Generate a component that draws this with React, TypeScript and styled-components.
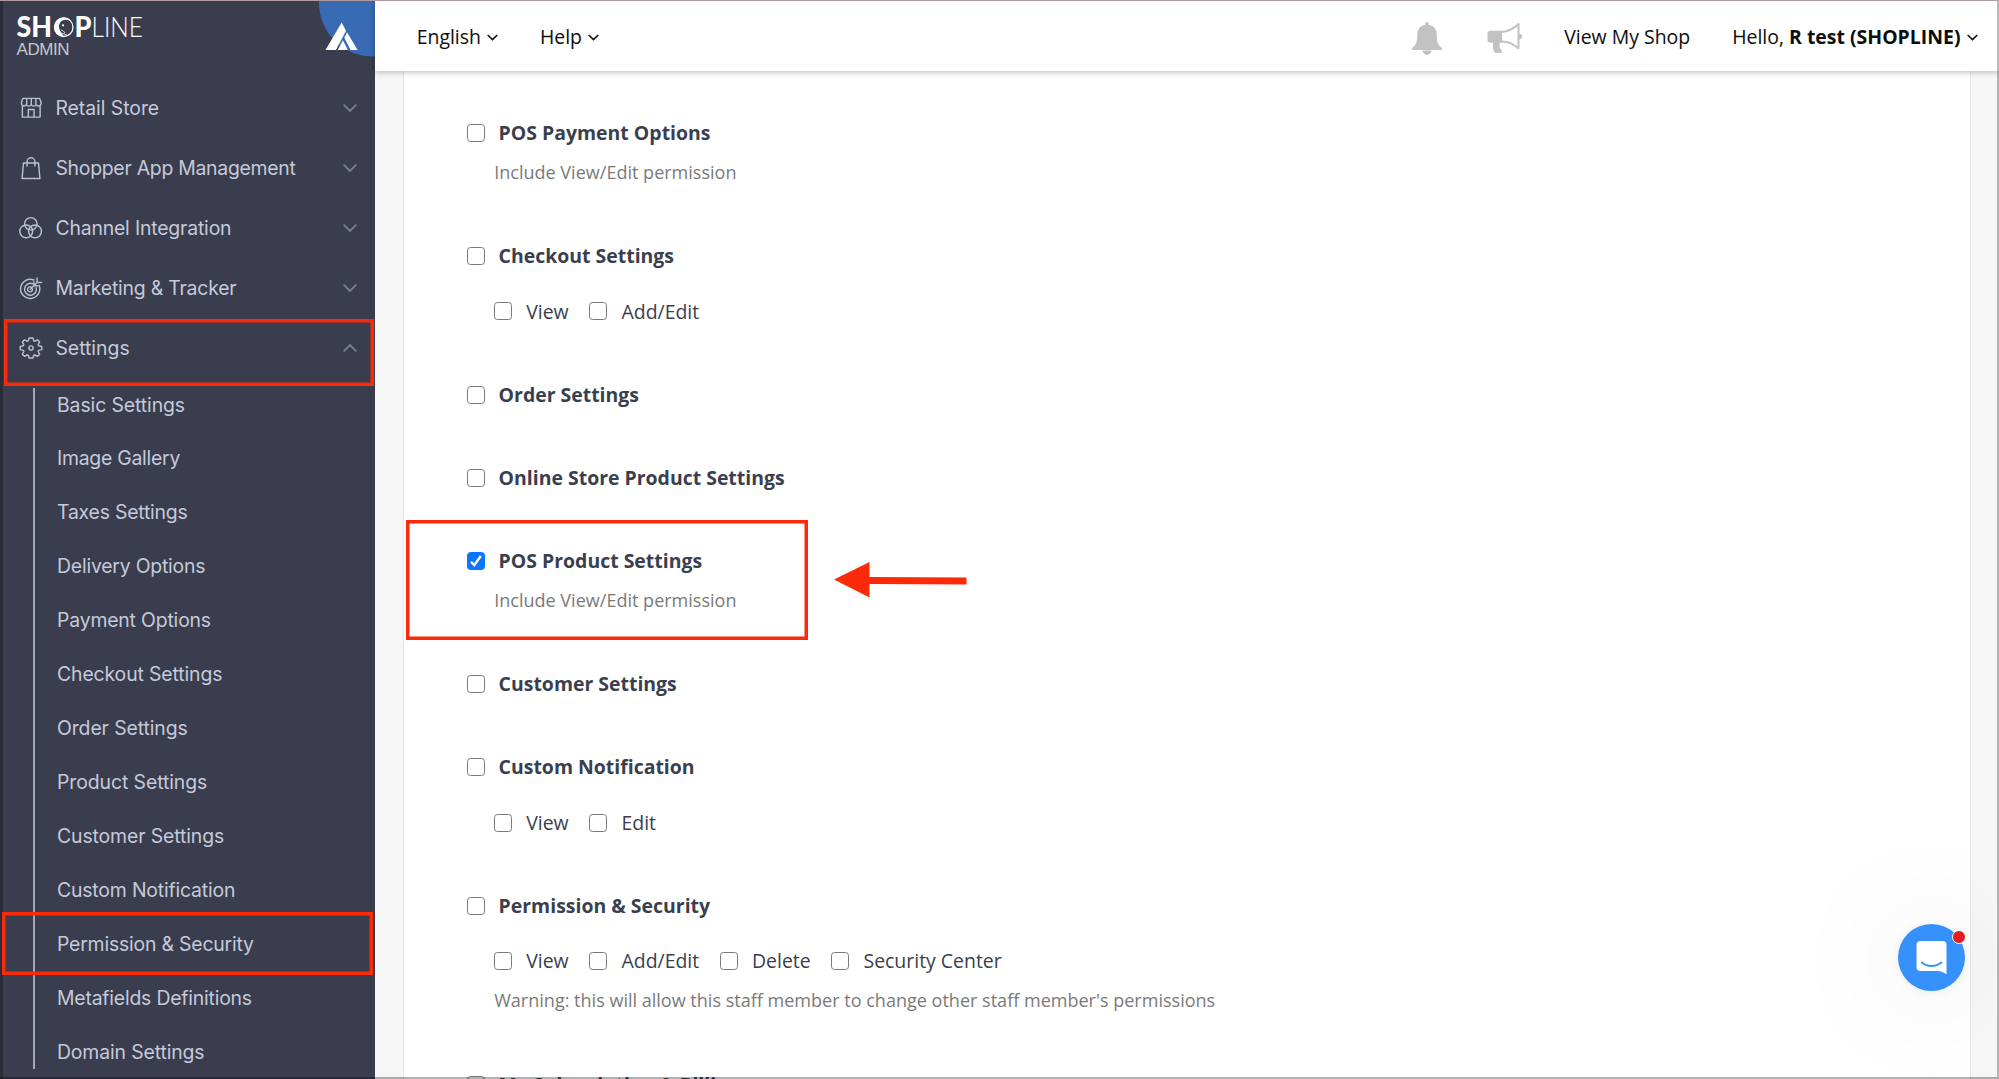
import React, { useState } from "react";
import styled, { createGlobalStyle } from "styled-components";

const GlobalStyle = createGlobalStyle`
  *, *::before, *::after { box-sizing: border-box; }
  body { margin: 0; background: #f7f7f7; overflow: hidden; }
`;

const Page = styled.div`
  position: relative;
  display: flex;
  width: 1999px;
  height: 1079px;
  overflow: hidden;
  background: #f7f7f7;
  font-family: "Open Sans", "Noto Sans", sans-serif;
`;

/* ---------- sidebar ---------- */

const Sidebar = styled.aside`
  flex: none;
  width: 375px;
  height: 100%;
  background: #393d4d;
  border-left: 3px solid #2a2d39;
  color: #c5cadb;
  font-family: Inter, "Liberation Sans", sans-serif;
  overflow: hidden;
`;

const Brand = styled.div`
  display: flex;
  justify-content: space-between;
  height: 78px;
`;

const MenuRow = styled.div<{ $spacing: number }>`
  display: flex;
  align-items: center;
  height: 60px;
  padding: 0 18px 0 16px;
  font-size: 19.4px;
  letter-spacing: ${(p) => p.$spacing}px;
`;

const MenuIcon = styled.svg`
  flex: none;
  width: 24px;
  height: 24px;
  margin-right: 12.4px;
  fill: none;
  stroke: #b9bfd1;
  stroke-width: 1.5;
  stroke-linecap: round;
  stroke-linejoin: round;
`;

const MenuLabel = styled.span`
  flex: 1;
  white-space: nowrap;
`;

const MenuChevron = styled.svg<{ $open?: boolean }>`
  width: 14px;
  height: 8px;
  fill: none;
  stroke: #747d92;
  stroke-width: 1.9;
  transform: ${(p) => (p.$open ? "rotate(180deg)" : "none")};
`;

const SubMenu = styled.ul`
  list-style: none;
  margin: 10px 0 0 30px;
  padding: 0;
  height: 681px;
  border-left: 2px solid #a4a9b9;
`;

const SubItem = styled.li<{ $spacing: number }>`
  display: flex;
  align-items: center;
  height: 54px;
  padding-left: 22px;
  font-size: 19.4px;
  letter-spacing: ${(p) => p.$spacing}px;
  white-space: nowrap;
  &:first-child { height: 43px; padding-bottom: 10px; }
`;

/* ---------- header ---------- */

const Main = styled.div`
  flex: 1;
  min-width: 0;
  display: flex;
  flex-direction: column;
`;

const Header = styled.header`
  flex: none;
  z-index: 1;
  display: flex;
  align-items: center;
  justify-content: space-between;
  height: 71px;
  padding: 2px 21.5px 0 41.7px;
  background: #fff;
  color: #0d0d0d;
  font-size: 19.44px;
  box-shadow: 0 1px 6px rgba(0, 0, 0, 0.28);
`;

const HeaderGroup = styled.div`
  display: flex;
  align-items: center;
  gap: 42px;
`;

const HeaderLink = styled.span`
  display: flex;
  align-items: center;
  white-space: pre;
`;

const HeaderChevron = styled.svg`
  width: 11px;
  height: 7px;
  margin: 2px 0 0 6px;
  fill: none;
  stroke: #111;
  stroke-width: 1.7;
`;

const HeaderIcon = styled.svg<{ $w: number; $shift: number }>`
  width: ${(p) => p.$w}px;
  height: 36px;
  margin: 4px ${(p) => p.$shift}px 0 0;
  color: #c2c2c2;
`;

/* ---------- permissions ---------- */

const Card = styled.main`
  flex: 1;
  min-height: 0;
  overflow: hidden;
  margin: 0 28px 0 28px;
  padding: 48px 0 0 62.6px;
  background: #fff;
  border: solid #e6e6e6;
  border-width: 0 1px;
`;

const Section = styled.section`
  margin-bottom: 55.4px;
`;

const Row = styled.div<{ $sub?: boolean }>`
  display: flex;
  align-items: center;
  height: 27.8px;
  margin: ${(p) => (p.$sub ? "27.6px 0 0 27.6px" : "0")};
`;

const Option = styled.label<{ $bold?: boolean }>`
  display: flex;
  align-items: center;
  gap: 14px;
  margin-right: 20.8px;
  color: #3a3f4f;
  font-size: 19.44px;
  line-height: 27.8px;
  font-weight: ${(p) => (p.$bold ? 700 : 400)};
  white-space: nowrap;
`;

const CheckCell = styled.span`
  display: grid;
  width: 18px;
  height: 18px;
  > * { grid-area: 1 / 1; }
`;

const CheckInput = styled.input`
  appearance: none;
  width: 18px;
  height: 18px;
  margin: 0;
  border: 1.4px solid #7a7a7a;
  border-radius: 3.5px;
  background: #fff;
  &:checked { background: #0a76ff; border-color: #0a76ff; }
`;

const Tick = styled.svg`
  width: 18px;
  height: 18px;
  fill: none;
  stroke: #fff;
  stroke-width: 2.4;
  pointer-events: none;
`;

const Hint = styled.p`
  margin: 0 0 0 27.6px;
  padding-top: 12.2px;
  color: #7a7a7a;
  font-size: 18.05px;
  line-height: 27.8px;
  white-space: nowrap;
`;

/* ---------- overlays ---------- */

const Frame = styled.div`
  position: absolute;
  inset: 0;
  z-index: 5;
  pointer-events: none;
  border-top: 1px solid #b09a9d;
  border-right: 2px solid rgba(0, 0, 0, 0.27);
  border-bottom: 2px solid rgba(0, 0, 0, 0.3);
`;

const Highlight = styled.div<{ $x: number; $y: number; $w: number; $h: number }>`
  position: absolute;
  z-index: 4;
  left: ${(p) => p.$x}px;
  top: ${(p) => p.$y}px;
  width: ${(p) => p.$w}px;
  height: ${(p) => p.$h}px;
  box-shadow: inset 0 0 0 3.5px #fb2a08;
  pointer-events: none;
`;

const Arrow = styled.svg`
  position: absolute;
  z-index: 4;
  left: 834px;
  top: 561px;
  width: 133px;
  height: 37px;
  fill: #fb2a08;
`;

const ChatButton = styled.button`
  position: absolute;
  z-index: 3;
  left: 1897.5px;
  top: 924px;
  width: 67px;
  height: 67px;
  padding: 0;
  border: 0;
  border-radius: 50%;
  background: #3691fc;
  box-shadow: 0 1px 9px rgba(0, 0, 0, 0.06), 0 3px 120px rgba(0, 0, 0, 0.13);
`;

const ChatGlyph = styled.svg`
  display: block;
  width: 67px;
  height: 67px;
`;

const ChatDot = styled.span`
  position: absolute;
  left: 54px;
  top: 6px;
  width: 14px;
  height: 14px;
  border: 1.4px solid #fff;
  border-radius: 50%;
  background: #e01f22;
`;

/* ---------- drawings ---------- */

const Logo = () => (
  <svg width="160" height="60" viewBox="3 0 160 60">
    <g fontFamily="Lato, sans-serif" fill="#fff" fontSize="28">
      <text x="16.5" y="37" fontWeight="900" textLength="35.5" lengthAdjust="spacingAndGlyphs">SH</text>
      <text x="74.5" y="37" fontWeight="900" textLength="17" lengthAdjust="spacingAndGlyphs">P</text>
      <text x="91.5" y="37" fontWeight="300" textLength="51.5" lengthAdjust="spacingAndGlyphs">LINE</text>
    </g>
    <circle cx="63.7" cy="27.2" r="9.3" fill="none" stroke="#fff" strokeWidth="1.3" />
    <path d="M54.5 27a9.4 9.4 0 0 1 16.4-6.2c-3-1.700-7.600-1.500-9.900.8-2.500 2.600-2.400 6.300-.8 9.200.8 1.500 2 3.200 3.600 5.800-5.100.2-9.300-4.200-9.300-9.600z" fill="#fff" />
    <path d="M61 30c2 .4 3.200 1.400 3.800 3M61.500 33l5.500 2" stroke="#fff" strokeWidth=".8" fill="none" />
    <circle cx="63" cy="25.300" r="1.100" fill="#fff" />
    <text x="16.500" y="54.700" fontFamily="Liberation Sans, Arial, sans-serif" fontSize="17" fill="#c6c7cc" textLength="53" lengthAdjust="spacing">ADMIN</text>
  </svg>
);

const Badge = () => (
  <svg width="56" height="60" viewBox="319 0 56 60">
    <circle cx="373" cy="2.500" r="54" fill="#386bb4" />
    <path d="M341.700 22.500l4.300 8.300-10 19.200h-10.500z" fill="#fff" />
    <path d="M347 32.300l10.600 17.700h-7l-6.300-12.300z" fill="#fff" />
    <path d="M342.900 40.300l4.900 9.700h-10.100z" fill="#fff" />
  </svg>
);

const icons: Record<string, React.ReactNode> = {
  store: (
    <path d="M3.500 9.500v12h18.500v-12M4 2h17.500l1.500 4v1.500a2.600 2.600 0 0 1-5 .8 2.800 2.800 0 0 1-5.200 0 2.800 2.800 0 0 1-5.200 0 2.600 2.600 0 0 1-5-.8V6zM8 2.500v5.500M12.800 2.500v5.500M17.600 2.500v5.500M9.700 21.500v-8h6v8" />
  ),
  bag: <path d="M4.700 6.700h15.600l1.500 16.200H3.200zM8.400 10V5.500a4.100 4.100 0 0 1 8.200 0V10" />,
  channels: (
    <>
      <circle cx="12.300" cy="7.700" r="6.500" />
      <circle cx="7.500" cy="15.500" r="6.700" />
      <circle cx="16.700" cy="15.500" r="6.700" />
    </>
  ),
  target: (
    <path d="M15.500 3.700a10 10 0 1 0 5.500 5.700M14.300 7.600a6.200 6.200 0 1 0 3.600 4M12.500 11a2.600 2.600 0 1 0 1.600 2M11.800 13.300l7-7M18.800 6.300V1.500M18.800 6.300h4.700M15.500 5.500v4.100h4.100" />
  ),
  gear: (
    <>
      <circle cx="12.500" cy="12" r="2.200" />
      <path d="M10.500 1.500h4l.8 2.800a1 1 0 0 0 1.400.6l2.600-1.400 2.200 2.200-1.400 2.600a1 1 0 0 0 .6 1.400l3 .8v3.200l-3 .8a1 1 0 0 0-.6 1.400l1.400 2.600-2.200 2.200-2.600-1.400a1 1 0 0 0-1.400.6l-.8 2.600h-4l-.8-2.600a1 1 0 0 0-1.400-.6l-2.600 1.400-2.200-2.200 1.400-2.600a1 1 0 0 0-.6-1.400l-3-.8v-3.200l3-.8a1 1 0 0 0 .6-1.400L3.500 5.700l2.200-2.200 2.600 1.400a1 1 0 0 0 1.400-.6z" />
    </>
  ),
};

const Caret = () => (
  <HeaderChevron viewBox="0 0 11 7">
    <path d="M.7 1l4.800 4.600L10.300 1" />
  </HeaderChevron>
);

const menu = [
  { icon: "store", label: "Retail Store", spacing: -0.04 },
  { icon: "bag", label: "Shopper App Management", spacing: -0.26 },
  { icon: "channels", label: "Channel Integration", spacing: -0.17 },
  { icon: "target", label: "Marketing & Tracker", spacing: -0.2 },
  { icon: "gear", label: "Settings", spacing: 0, open: true },
];

const settings: [string, number][] = [
  ["Basic Settings", -0.09],
  ["Image Gallery", -0.25],
  ["Taxes Settings", -0.2],
  ["Delivery Options", -0.2],
  ["Payment Options", -0.17],
  ["Checkout Settings", -0.12],
  ["Order Settings", -0.1],
  ["Product Settings", -0.08],
  ["Customer Settings", -0.11],
  ["Custom Notification", -0.17],
  ["Permission & Security", -0.19],
  ["Metafields Definitions", -0.2],
  ["Domain Settings", -0.13],
];

type Permission = { title: string; options?: string[]; hint?: string; checked?: boolean };

const permissions: Permission[] = [
  { title: "POS Payment Options", hint: "Include View/Edit permission" },
  { title: "Checkout Settings", options: ["View", "Add/Edit"] },
  { title: "Order Settings" },
  { title: "Online Store Product Settings" },
  { title: "POS Product Settings", hint: "Include View/Edit permission", checked: true },
  { title: "Customer Settings" },
  { title: "Custom Notification", options: ["View", "Edit"] },
  {
    title: "Permission & Security",
    options: ["View", "Add/Edit", "Delete", "Security Center"],
    hint: "Warning: this will allow this staff member to change other staff member's permissions",
  },
  { title: "My Subscription & Billing" },
];

function CheckOption({ label, bold, initial = false }: { label: string; bold?: boolean; initial?: boolean }) {
  const [on, setOn] = useState(initial);
  return (
    <Option $bold={bold}>
      <CheckCell>
        <CheckInput type="checkbox" checked={on} onChange={() => setOn(!on)} />
        {on && (
          <Tick viewBox="0 0 18 18">
            <path d="M4 9.700l3.300 3.500L13.800 4" />
          </Tick>
        )}
      </CheckCell>
      {label}
    </Option>
  );
}

export default function App() {
  return (
    <Page>
      <GlobalStyle />
      <Sidebar>
        <Brand>
          <Logo />
          <Badge />
        </Brand>
        <nav>
          {menu.map((m) => (
            <MenuRow key={m.label} $spacing={m.spacing}>
              <MenuIcon viewBox="0 0 25 24">{icons[m.icon]}</MenuIcon>
              <MenuLabel>{m.label}</MenuLabel>
              <MenuChevron viewBox="0 0 14 8" $open={m.open}>
                <path d="M.7.700L7 7 13.300.7" />
              </MenuChevron>
            </MenuRow>
          ))}
          <SubMenu>
            {settings.map(([label, spacing]) => (
              <SubItem key={label} $spacing={spacing}>{label}</SubItem>
            ))}
          </SubMenu>
        </nav>
      </Sidebar>

      <Main>
        <Header>
          <HeaderGroup>
            <HeaderLink>English<Caret /></HeaderLink>
            <HeaderLink>Help<Caret /></HeaderLink>
          </HeaderGroup>
          <HeaderGroup>
            <HeaderIcon $w={32} $shift={2.3} viewBox="0 0 32 36">
              <path fill="currentColor" d="M16 1c1 0 1.700.7 1.700 1.600v1.100c5 .9 8 4.600 8 9.800 0 7.200 1 10.600 5.100 13.200.7.500.5 2.300-.6 2.300H1.800c-1.100 0-1.300-1.800-.6-2.300 4.100-2.600 5.100-6 5.100-13.200 0-5.200 3-8.900 8-9.800V2.600C14.300 1.700 15 1 16 1zM11.600 29.500h8.800a4.400 4.400 0 0 1-8.800 0z" />
            </HeaderIcon>
            <HeaderIcon $w={36} $shift={-1} viewBox="0 0 36 36">
              <path fill="currentColor" d="M3.500 9.800H15v12h-2.200c-.8 3 .1 6 1.900 8 .8.900.3 2.200-1 2.200H9.300c-1.300 0-2-.7-2.500-2-.9-2.700-1.100-5.200-.9-8.200H3.500C1.600 21.800.5 20.600.5 19v-6.400c0-1.700 1.200-2.800 3-2.800z" />
              <path fill="none" stroke="currentColor" strokeWidth="2" strokeLinejoin="round" d="M14.500 10.900C20.500 10.500 27 7.500 31.500 3v24.300c-4.500-4-10.500-6.600-17-6.700" />
              <path fill="currentColor" d="M31.800 12.500c4.400.2 4.400 5.600 0 5.800z" />
            </HeaderIcon>
            <HeaderLink>View My Shop</HeaderLink>
            <HeaderLink>Hello, <b>R test (SHOPLINE)</b><Caret /></HeaderLink>
          </HeaderGroup>
        </Header>
        <Card>
          {permissions.map((p) => (
            <Section key={p.title}>
              <Row>
                <CheckOption label={p.title} bold initial={p.checked} />
              </Row>
              {p.options && (
                <Row $sub>
                  {p.options.map((o) => (
                    <CheckOption key={o} label={o} />
                  ))}
                </Row>
              )}
              {p.hint && <Hint>{p.hint}</Hint>}
            </Section>
          ))}
        </Card>
      </Main>

      <Highlight $x={4} $y={319} $w={370} $h={67} />
      <Highlight $x={2} $y={912} $w={371} $h={63} />
      <Highlight $x={406} $y={520} $w={402} $h={120} />
      <Arrow viewBox="0 0 133 37">
        <path d="M0 18.500L35.500 1v15l97 .5v7l-97-.5v13.500z" />
      </Arrow>
      <ChatButton aria-label="Open chat">
        <ChatGlyph viewBox="0 0 67 67">
          <path fill="#fff" d="M22.500 17h22a4 4 0 0 1 4 4v29.200c-3-1.800-5.500-3-9-3.200h-17a4 4 0 0 1-4-4V21a4 4 0 0 1 4-4z" />
          <path fill="none" stroke="#3691fc" strokeWidth="2" strokeLinecap="round" d="M23.800 38.500c5.500 4.600 14 4.600 19.500 0" />
        </ChatGlyph>
        <ChatDot />
      </ChatButton>
      <Frame />
    </Page>
  );
}
